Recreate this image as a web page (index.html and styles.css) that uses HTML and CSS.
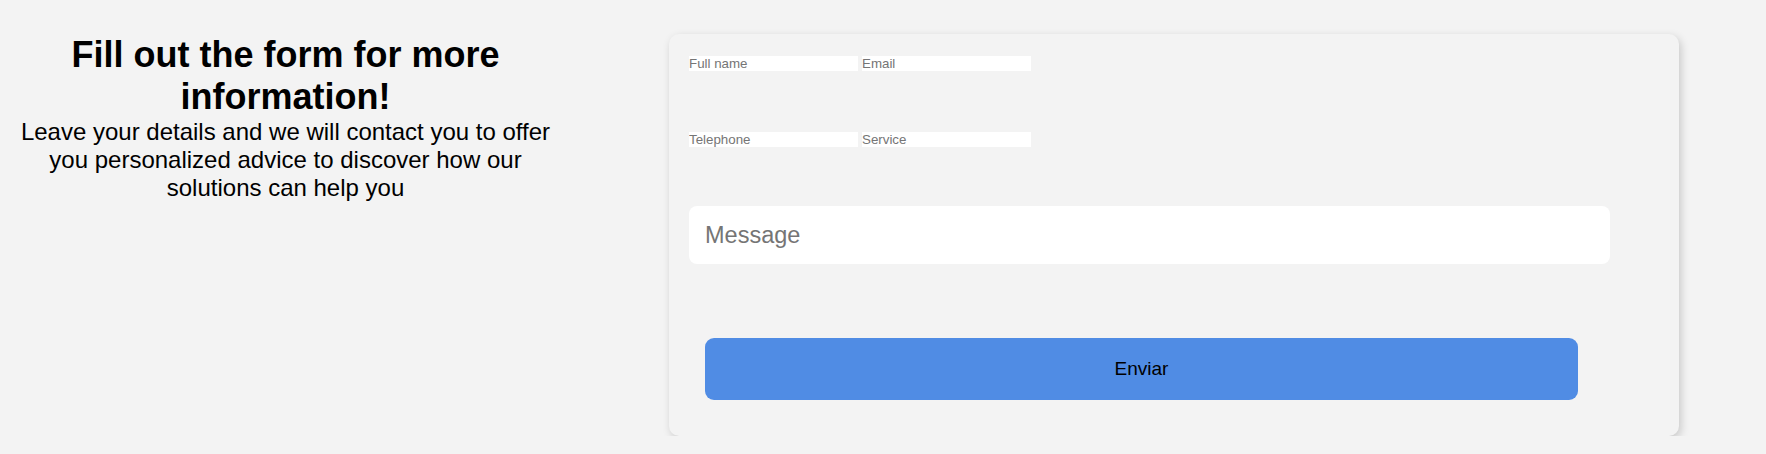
FILE: index.html
```html
<!DOCTYPE html>
<html lang="en">
<head>
<meta charset="utf-8">
<title>Contact form</title>
<link rel="stylesheet" href="styles.css">
</head>
<body>
<main class="page">
  <section class="intro">
    <h1 class="intro-title">Fill out the form for more information!</h1>
    <p class="intro-text">Leave your details and we will contact you to offer you personalized advice to discover how our solutions can help you</p>
  </section>
  <form class="card">
    <div class="row row-first">
      <input class="field" type="text" placeholder="Full name">
      <input class="field" type="email" placeholder="Email">
    </div>
    <div class="row row-second">
      <input class="field" type="tel" placeholder="Telephone">
      <input class="field" type="text" placeholder="Service">
    </div>
    <textarea class="message" placeholder="Message"></textarea>
    <button class="submit" type="button">Enviar</button>
  </form>
</main>
</body>
</html>
```

FILE: styles.css
```css
html, body {
  background: #f3f3f3;
}
body {
  margin: 8px;
  font-family: "Liberation Sans", Arial, sans-serif;
  color: #000;
}
.page {
  display: flex;
  align-items: flex-start;
  padding-top: 26px;
}
.intro {
  width: 555px;
  flex: none;
  text-align: center;
}
.intro-title {
  margin: 0;
  font-size: 36px;
  font-weight: bold;
  line-height: normal;
}
.intro-text {
  margin: 0;
  font-size: 24px;
  line-height: normal;
}
.card {
  flex: none;
  width: 1010px;
  box-sizing: border-box;
  margin-left: 106px;
  padding: 22px 20px 36px 20px;
  background: #f3f3f3;
  border-radius: 10px;
  box-shadow: 2px 3px 8px rgba(0, 0, 0, 0.18);
}
.row {
  display: flex;
  gap: 4px;
}
.row-first {
  margin-bottom: 61px;
}
.row-second {
  margin-bottom: 59px;
}
.field {
  width: 169px;
  height: 15px;
  box-sizing: border-box;
  padding: 0;
  border: 0;
  outline: none;
  background: #fff;
  font-family: "Liberation Sans", Arial, sans-serif;
  font-size: 13.33px;
  line-height: 15px;
  color: #000;
}
.field::placeholder {
  color: #757575;
}
.message {
  display: block;
  width: 921px;
  height: 58px;
  box-sizing: border-box;
  padding: 16px;
  border: 0;
  outline: none;
  resize: none;
  border-radius: 8px;
  background: #fff;
  font-family: "Liberation Sans", Arial, sans-serif;
  font-size: 23.5px;
  line-height: normal;
  overflow: hidden;
}
.message::placeholder {
  color: #757575;
}
.submit {
  display: block;
  width: 873px;
  height: 62px;
  margin: 74px 0 0 16px;
  border: 0;
  border-radius: 9px;
  background: #508ce4;
  color: #000;
  font-family: "Liberation Sans", Arial, sans-serif;
  font-size: 19px;
  cursor: pointer;
}
```
